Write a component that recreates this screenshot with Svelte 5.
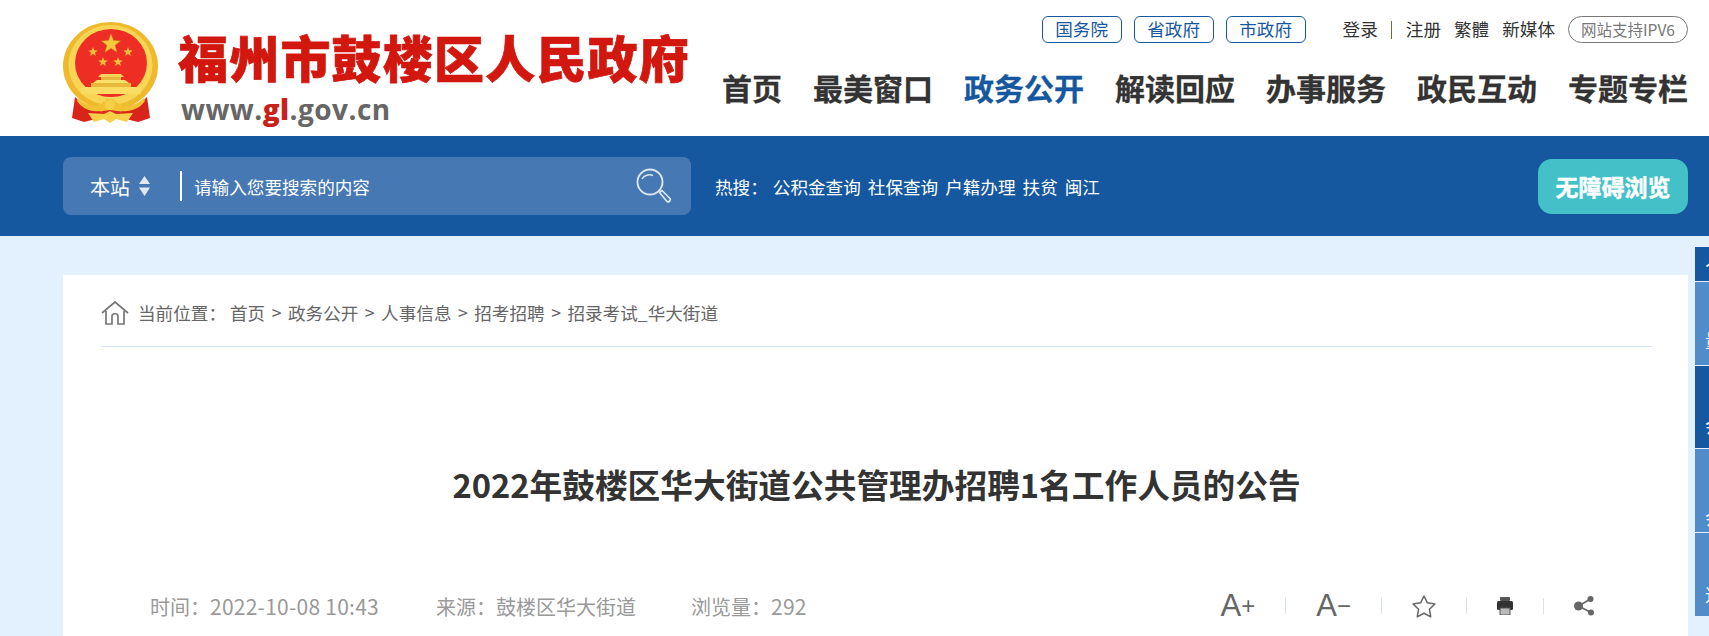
<script>
	const tabs = ['国务院', '省政府', '市政府'];
	const nav = ['首页', '最美窗口', '政务公开', '解读回应', '办事服务', '政民互动', '专题专栏'];
	const hot = ['公积金查询', '社保查询', '户籍办理', '扶贫', '闽江'];
	const crumbs = ['政务公开', '人事信息', '招考招聘', '招录考试_华大街道'];
	const side = [
		{ text: '人', h: 34, pb: 12, dark: true },
		{ text: '量', h: 83, pb: 14, dark: false },
		{ text: '会', h: 82, pb: 12, dark: true },
		{ text: '会', h: 83, pb: 4, dark: false },
		{ text: '述', h: 83, pb: 11, dark: false }
	];
	const petals = [-10, -6, -2, 2, 6, 10];

	// five pointed star as svg points
	function star(cx, cy, r, inner = 0.42) {
		const pts = [];
		for (let i = 0; i < 10; i++) {
			const a = -Math.PI / 2 + (i * Math.PI) / 5;
			const d = i % 2 ? r * inner : r;
			pts.push((cx + d * Math.cos(a)).toFixed(2) + ',' + (cy + d * Math.sin(a)).toFixed(2));
		}
		return pts.join(' ');
	}
</script>

<div class="page">
	<header class="top">
		<div class="logo">
			<svg class="emblem" width="104" height="106" viewBox="60 20 104 106">
				<ellipse cx="110.5" cy="66" rx="47.5" ry="44" fill="#efb92e" />
				<ellipse cx="110.5" cy="65" rx="42" ry="40" fill="#f8d655" />
				<ellipse cx="111" cy="63" rx="36" ry="34" fill="#ee2d24" />
				<polygon points={star(111, 44, 10)} fill="#f5c93c" stroke="#c99a1e" stroke-width="0.5" />
				<polygon points={star(93, 52, 5)} fill="#f0bf38" />
				<polygon points={star(128, 52, 5)} fill="#f0bf38" />
				<polygon points={star(103, 62, 5)} fill="#f0bf38" />
				<polygon points={star(118, 62, 5)} fill="#f0bf38" />
				<path d="M101 74 H121 L124 77 H98 Z" fill="#f8d45a" />
				<rect x="101" y="77" width="20" height="3" fill="#e8b83a" />
				<path d="M93 83 L97 80 H125 L129 83 Z" fill="#fbe06a" />
				<rect x="91" y="83" width="40" height="4" fill="#e9b93c" />
				<rect x="81" y="87" width="60" height="7" fill="#fbdc62" />
				<path d="M75 97 C82 104 92 108 102 108 L100 118 L84 122 L72 118 Z" fill="#d8241a" />
				<path d="M147 97 C140 104 130 108 120 108 L122 118 L138 122 L150 118 Z" fill="#d8241a" />
				<path d="M102 108 H120 L122 118 H100 Z" fill="#e02a20" />
				<path d="M78 98 C86 106 96 108 110 105 C124 108 136 106 144 98 L145 101 C138 111 126 113 110 110 C94 113 84 111 77 101 Z" fill="#f2c233" />
				<path d="M88 113 L104 114 L110 111 L116 114 L133 113 L127 122 L116 119 L110 123 L104 119 L94 122 Z" fill="#f7d04a" />
				{#each petals as p}
					<circle cx={110 + p} cy={106 - (10 - Math.abs(p)) * 0.6} r="2.2" fill="#f2c233" />
				{/each}
				<circle cx="110" cy="105" r="5" fill="#f7d04a" />
			</svg>
			<div class="brand">
				<div class="name">福州市鼓楼区人民政府</div>
				<div class="site">www.<b>gl</b>.gov.cn</div>
			</div>
		</div>
		<div class="head-right">
			<div class="links">
				{#each tabs as t}
					<a class="tab" href="#top">{t}</a>
				{/each}
				<a class="link login" href="#top">登录</a>
				<i class="bar"></i>
				<a class="link" href="#top">注册</a>
				<a class="link" href="#top">繁體</a>
				<a class="link" href="#top">新媒体</a>
				<span class="ipv6">网站支持IPV6</span>
			</div>
			<nav>
				{#each nav as n}
					<a class:on={n === '政务公开'} href="#top">{n}</a>
				{/each}
			</nav>
		</div>
	</header>

	<div class="band">
		<div class="search">
			<span class="scope">本站</span>
			<svg class="updown" width="11" height="20" viewBox="0 0 11 20">
				<path d="M5.5 0 L11 8 H0 Z M0 11.5 H11 L5.5 20 Z" fill="#dfe8f3" />
			</svg>
			<i class="divider"></i>
			<span class="hint">请输入您要搜索的内容</span>
			<svg class="glass" width="36" height="36" viewBox="0 0 36 36" fill="none" stroke="#dce7f3">
				<circle cx="14" cy="14" r="12.5" stroke-width="1.9" />
				<path d="M6 11 C8 7 13 6 17 7.5" stroke-width="1.5" />
				<path d="M23.5 24.5 L26 22.5 L34 30.5 C35 32 33 35 31 33.5 Z" stroke-width="1.7" stroke-linejoin="round" />
			</svg>
		</div>
		<div class="hot">
			<span class="hot-label">热搜：</span>
			{#each hot as h}
				<a href="#top">{h}</a>
			{/each}
		</div>
		<button class="access">无障碍浏览</button>
	</div>

	<main>
		<article>
			<div class="crumb">
				<svg width="28" height="24" viewBox="0 0 28 24" fill="none" stroke="#777" stroke-width="1.7">
					<path d="M1 12 L14 1 L27 12" />
					<path d="M5 10 V23 H11 V15 C11 12 17 12 17 15 V23 H23 V10" />
				</svg>
				<span class="here">当前位置：</span>
				<span>首页</span>
				{#each crumbs as c}
					<span class="gt">&gt;</span>
					<span>{c}</span>
				{/each}
			</div>
			<h1>2022年鼓楼区华大街道公共管理办招聘1名工作人员的公告</h1>
			<div class="meta">
				<span class="m-time">时间：<span class="num">2022-10-08 10:43</span></span>
				<span class="m-src">来源：鼓楼区华大街道</span>
				<span class="m-view">浏览量：<span class="num">292</span></span>
				<div class="tools">
					<span class="font-btn">A<small>+</small></span>
					<i class="sep"></i>
					<span class="font-btn">A<small>−</small></span>
					<i class="sep"></i>
					<svg width="24" height="23" viewBox="0 0 24 23" fill="none" stroke="#666" stroke-width="1.5" stroke-linejoin="round">
						<polygon points={star(12, 12.5, 11.5, 0.5)} />
					</svg>
					<i class="sep"></i>
					<svg width="16" height="18" viewBox="0 0 16 18">
						<rect x="3" y="0" width="10" height="4" rx="1" fill="#555" />
						<rect x="0" y="4" width="16" height="9" rx="1.5" fill="#333" />
						<rect x="3" y="11" width="10" height="7" fill="#bbb" stroke="#555" />
					</svg>
					<i class="sep"></i>
					<svg width="21" height="20" viewBox="0 0 21 20" fill="#666">
						<circle cx="4.5" cy="10" r="4.5" />
						<circle cx="16.5" cy="3" r="3" />
						<circle cx="17" cy="16.5" r="3" />
						<path d="M4.5 10 L16.5 3 M4.5 10 L17 16.5" stroke="#666" stroke-width="1.6" />
					</svg>
				</div>
			</div>
		</article>
	</main>

	<aside>
		{#each side as s}
			<div class="side-item" class:dark={s.dark} style="height: {s.h}px; padding-bottom: {s.pb}px">{s.text}</div>
		{/each}
	</aside>
</div>

<style>
	:global(body) {
		margin: 0;
		overflow: hidden;
		background: #e3f1fe;
	}

	.page {
		position: relative;
		height: 636px;
		overflow: hidden;
		font-family: 'Noto Sans CJK SC', 'Liberation Sans', sans-serif;
		color: #333;
	}

	a {
		color: inherit;
		text-decoration: none;
	}

	.top {
		display: flex;
		justify-content: space-between;
		height: 136px;
		background: #fff;
		padding: 0 21px 0 60px;
		box-sizing: border-box;
	}

	.logo {
		display: flex;
		padding-top: 20px;
	}

	.emblem {
		display: block;
	}

	.brand {
		margin-left: 14px;
		padding-top: 8px;
	}

	.name {
		font-size: 50px;
		line-height: 56px;
		font-weight: 900;
		letter-spacing: 1.2px;
		-webkit-text-stroke: 0.7px #d2170f;
		color: #d2170f;
		white-space: nowrap;
	}

	.site {
		font-family: 'Open Sans', sans-serif;
		font-size: 28px;
		line-height: 36px;
		font-weight: 700;
		letter-spacing: 0.45px;
		color: #666;
		margin-left: 3px;
		margin-top: 7px;
	}

	.site b {
		color: #c9201a;
	}

	.head-right {
		padding-top: 16px;
	}

	.links {
		display: flex;
		align-items: center;
		justify-content: flex-end;
		height: 27px;
		font-size: 17.6px;
	}

	.tab {
		width: 80px;
		height: 27px;
		box-sizing: border-box;
		border: 1px solid #16589f;
		border-radius: 6px;
		margin-right: 12px;
		color: #16589f;
		text-align: center;
		line-height: 24px;
	}

	.link {
		margin-right: 13px;
		padding-bottom: 3px;
	}

	.login {
		margin: 0 0 0 25px;
	}

	.bar {
		width: 1px;
		height: 18px;
		background: #7a6a3a;
		margin: 0 14px 0 13px;
	}

	.ipv6 {
		width: 120px;
		height: 27px;
		box-sizing: border-box;
		border: 1px solid #777;
		border-radius: 14px;
		font-size: 15.5px;
		line-height: 24px;
		text-align: center;
		color: #777;
	}

	nav {
		display: flex;
		justify-content: flex-end;
		gap: 31px;
		margin-top: 24px;
		font-size: 30px;
		line-height: 40px;
		font-weight: 700;
		-webkit-text-stroke: 0.3px currentColor;
	}

	nav a.on {
		color: #16589f;
	}

	.band {
		display: flex;
		align-items: center;
		height: 100px;
		background: #16589f;
		padding: 0 21px 0 63px;
		color: #fff;
	}

	.search {
		display: flex;
		align-items: center;
		width: 628px;
		height: 58px;
		box-sizing: border-box;
		padding: 0 19px 0 27px;
		background: #4678b3;
		border-radius: 8px;
		font-size: 17.6px;
	}

	.scope {
		font-size: 20px;
	}

	.updown {
		margin-left: 9px;
	}

	.divider {
		width: 2px;
		height: 30px;
		background: #fff;
		margin: 0 12px 0 30px;
	}

	.hint {
		flex: 1;
	}

	.hot {
		display: flex;
		gap: 7px;
		margin-left: 24px;
		font-size: 17.6px;
	}

	.hot-label {
		margin-right: -2px;
	}

	.access {
		width: 150px;
		height: 55px;
		margin-left: auto;
		border: none;
		border-radius: 14px;
		background: #43c0c8;
		color: #fff;
		font-family: inherit;
		font-size: 23px;
		font-weight: 700;
		-webkit-text-stroke: 0.4px #fff;
		padding: 0;
	}

	main {
		padding: 39px 21px 0 63px;
	}

	article {
		height: 400px;
		background: #fff;
		padding: 0 36px 0 38px;
	}

	.crumb {
		display: flex;
		align-items: center;
		height: 72px;
		padding-top: 4px;
		box-sizing: border-box;
		border-bottom: 1px solid #d5e5f5;
		font-size: 17.6px;
		color: #666;
		white-space: nowrap;
	}

	.here {
		margin: 0 4px 0 9px;
	}

	.gt {
		margin: 0 6.5px;
	}

	h1 {
		margin: 114px 0 0;
		font-size: 32.7px;
		line-height: 46px;
		font-weight: 700;
		text-align: center;
		color: #333;
	}

	.meta {
		display: flex;
		align-items: center;
		height: 40px;
		margin-top: 79px;
		padding-left: 49px;
		font-size: 20px;
		color: #999;
		white-space: nowrap;
	}

	.num {
		font-size: 21px;
		letter-spacing: 0.25px;
	}

	.m-time {
		width: 286px;
	}

	.m-src {
		width: 255px;
	}

	.tools {
		display: flex;
		align-items: center;
		margin-left: auto;
		margin-right: 57px;
		gap: 30px;
	}

	.font-btn {
		display: flex;
		align-items: center;
		font-family: 'Liberation Sans', sans-serif;
		font-size: 31px;
		line-height: 30px;
		color: #666;
	}

	.font-btn small {
		font-size: 24px;
		margin-left: 0;
	}

	.sep {
		width: 1px;
		height: 16px;
		background: #d8e2e8;
	}

	aside {
		position: absolute;
		top: 247px;
		right: 0;
		width: 14px;
		overflow: hidden;
	}

	.side-item {
		box-sizing: border-box;
		width: 80px;
		margin-bottom: 1px;
		padding-left: 10px;
		background: #4f8cc9;
		color: #fff;
		font-size: 18px;
		line-height: 22px;
		display: flex;
		align-items: flex-end;
	}

	.side-item.dark {
		background: #16589f;
	}
</style>
